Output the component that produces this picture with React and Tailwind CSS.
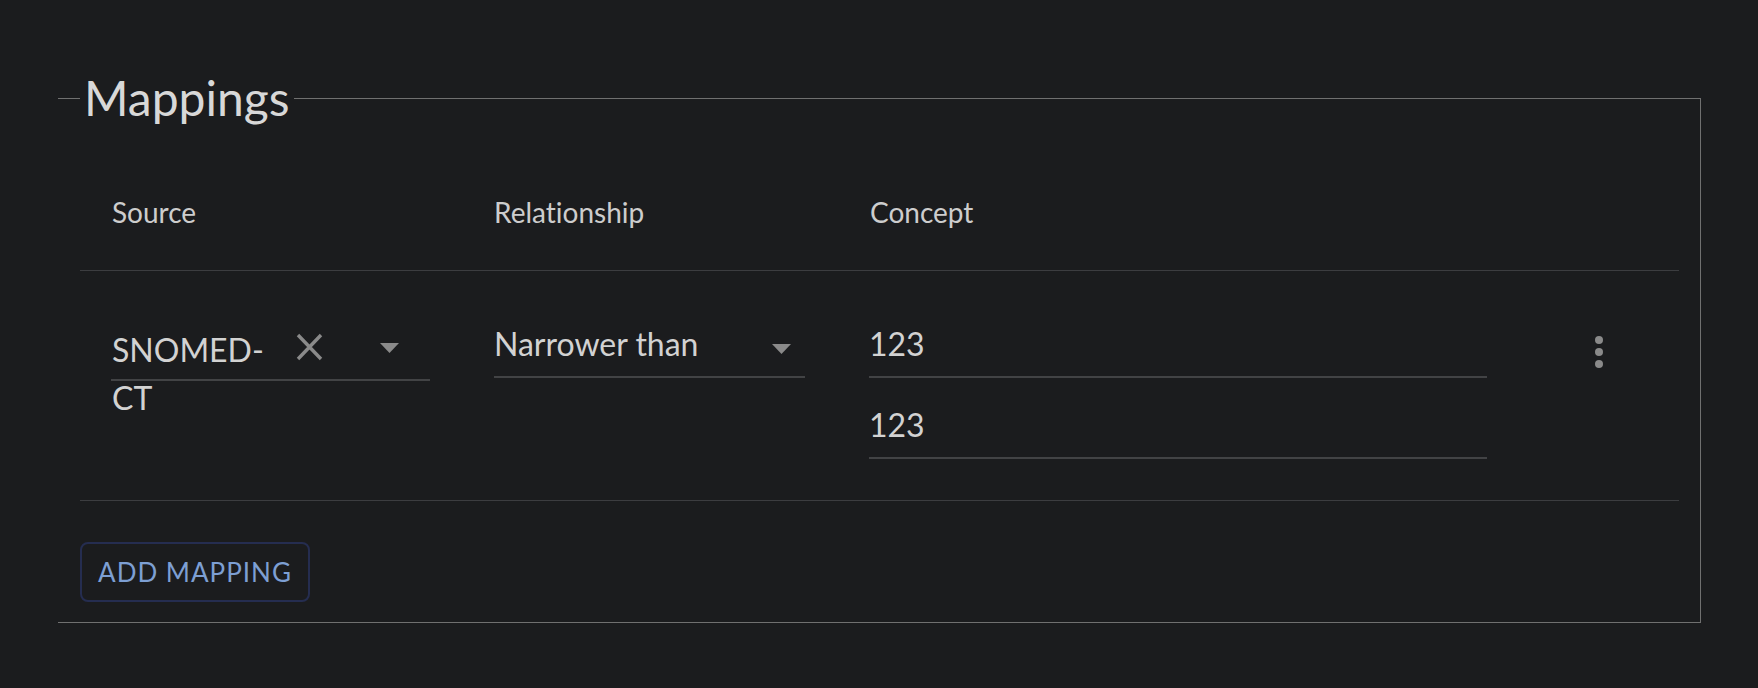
import React from 'react';

const font = { fontFamily: 'Lato, "Open Sans", sans-serif' };

const ClearIcon = () => (
    <svg width="27" height="28" viewBox="0 0 27 28" className="shrink-0 mt-[7px] ml-[20px]">
        <path d="M2 2 L25 26 M25 2 L2 26" stroke="#8a8a8a" strokeWidth="3.4" strokeLinecap="butt" fill="none" />
    </svg>
);

const ArrowDown = ({ className }) => (
    <svg width="19" height="10" viewBox="0 0 19 10" className={className}>
        <polygon points="0,0 19,0 9.5,10" fill="#8a8a8a" />
    </svg>
);

const MoreVert = () => (
    <svg width="10" height="32" viewBox="0 0 10 32">
        <circle cx="5" cy="4" r="4" fill="#8a8a8a" />
        <circle cx="5" cy="16" r="4" fill="#8a8a8a" />
        <circle cx="5" cy="28" r="4" fill="#8a8a8a" />
    </svg>
);

const TextLine = ({ value }) => (
    <div className="w-[618px] border-b-2 border-[#424345] pt-2 pb-2 text-[32px] leading-[48px] text-[#d2d2d2]">
        {value}
    </div>
);

export default function App() {
    return (
        <div className="min-h-screen bg-[#1b1c1e] pt-[74px] pl-[58px] pr-[57px] pb-10 [font-variant-ligatures:none]" style={font}>
            {/* fieldset has no left border in the original */}
            <fieldset className="border border-l-0 border-[#707070] pl-[22px] pr-[21px] pb-[20px]">
                <legend className="px-[4px] text-[48px] leading-[48px] text-[#d8d8d8]">Mappings</legend>

                {/* Header */}
                <div className="grid grid-cols-[382px_376px_681px_160px] border-b border-[#3c3d40] pt-[69px] pb-[37px] text-[28px] leading-[42px] text-[#cdcdcd]">
                    <div className="pl-[32px]">Source</div>
                    <div className="pl-[32px]">Relationship</div>
                    <div className="pl-[32px]">Concept</div>
                    <div></div>
                </div>

                {/* Row */}
                <div className="grid grid-cols-[382px_376px_681px_160px] border-b border-[#3c3d40] h-[230px]">
                    <div className="pl-[31px] pt-[47px]">
                        <div className="flex items-start w-[319px] h-[63px] border-b-2 border-[#424345] pt-2">
                            <span className="w-[165px] pl-[1px] text-[32px] leading-[48px] text-[#d2d2d2]">SNOMED-CT</span>
                            <ClearIcon />
                            <ArrowDown className="shrink-0 mt-[17px] ml-[57px]" />
                        </div>
                    </div>
                    <div className="pl-[32px] pt-[41px]">
                        <div className="flex items-start justify-between w-[311px] border-b-2 border-[#424345] pt-2 pb-2">
                            <span className="text-[32px] leading-[48px] text-[#d2d2d2]">Narrower than</span>
                            <ArrowDown className="shrink-0 mt-[24px] mr-[14px]" />
                        </div>
                    </div>
                    <div className="pl-[31px] pt-[41px] flex flex-col gap-[15px]">
                        <TextLine value="123" />
                        <TextLine value="123" />
                    </div>
                    <div className="flex justify-center pt-[65px]">
                        <MoreVert />
                    </div>
                </div>

                <div className="pt-[41px]">
                    <button className="w-[230px] h-[60px] flex items-center justify-center rounded-[8px] border-2 border-[#252d50] text-[26px] tracking-[1px] text-[#7d9fd3]">
                        ADD MAPPING
                    </button>
                </div>
            </fieldset>
        </div>
    );
}
